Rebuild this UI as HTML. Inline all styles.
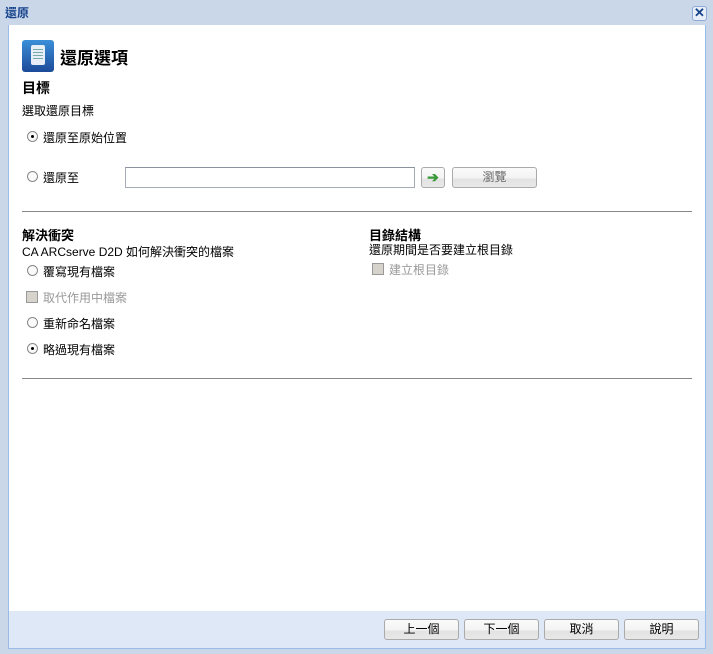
<!DOCTYPE html>
<html><head><meta charset="utf-8"><style>
*{margin:0;padding:0;box-sizing:border-box}
body{width:713px;height:654px;position:relative;overflow:hidden;background:#c9d7e8;font-family:"Liberation Sans","Noto Sans CJK TC",sans-serif;font-size:12px;color:#000}
.a{position:absolute}
.title{left:5px;top:4px;font-weight:bold;color:#15428b;font-size:12px}
.x{left:692px;top:6px;width:15px;height:15px;border:1px solid #8eaad6;border-radius:3px;background:#e8eef8;color:#15428b;font-size:13px;line-height:12px;text-align:center;font-weight:bold}
.body{left:8px;top:25px;width:698px;height:586px;background:#fff;border-left:1px solid #99bbe8;border-right:1px solid #99bbe8}
.foot{left:8px;top:611px;width:698px;height:38px;background:#dfe8f6;border:1px solid #99bbe8;border-top:none}
.rad{width:11px;height:11px;border:1px solid #888;border-radius:50%;background:#fafafa}
.rad.on::after{content:"";position:absolute;left:3px;top:3px;width:3px;height:3px;border-radius:50%;background:#000}
.chk{width:12px;height:12px;border:1px solid #999;background:#d6d2cc}
.btn{height:21px;border:1px solid #aaa;border-radius:3px;background:linear-gradient(#fafafa 0,#f3f3f3 55%,#e2e2e2 56%,#e8e8e8);text-align:center;line-height:19px;font-size:12px}
hr{position:absolute;border:none;border-top:1px solid #888;height:0}
</style></head><body>
<div class="a title">還原</div>
<div class="a x">✕</div>
<div class="a body"></div>
<div class="a foot"></div>
<div class="a" style="left:22px;top:40px;width:32px;height:32px;border-radius:3px;background:linear-gradient(#3b8fd8,#1c4a9a)"><div class="a" style="left:9px;top:5px;width:14px;height:20px;background:#e8eef5;border-radius:2px"></div><div class="a" style="left:11px;top:9px;width:10px;height:1px;background:#7aa;box-shadow:0 3px #7aa,0 6px #7aa,0 9px #7aa"></div></div>
<div class="a" style="left:60px;top:44px;font-size:17px;font-weight:bold">還原選項</div>
<div class="a" style="left:22px;top:78px;font-size:14px;font-weight:bold">目標</div>
<div class="a" style="left:22px;top:102px">選取還原目標</div>
<div class="a rad on" style="left:27px;top:131px"></div>
<div class="a" style="left:43px;top:129px">還原至原始位置</div>
<div class="a rad" style="left:27px;top:171px"></div>
<div class="a" style="left:43px;top:169px">還原至</div>
<div class="a" style="left:125px;top:167px;width:290px;height:21px;border:1px solid #a5acb5;border-top-color:#8a939e;background:#fff"></div>
<div class="a btn" style="left:421px;top:167px;width:24px;color:#3a9a3a;font-weight:bold;font-size:14px">➔</div>
<div class="a btn" style="left:452px;top:167px;width:85px;color:#666">瀏覽</div>
<hr style="left:22px;top:211px;width:670px">
<div class="a" style="left:22px;top:225px;font-size:13px;font-weight:bold">解決衝突</div>
<div class="a" style="left:22px;top:243px">CA ARCserve D2D 如何解決衝突的檔案</div>
<div class="a rad" style="left:27px;top:265px"></div>
<div class="a" style="left:43px;top:263px">覆寫現有檔案</div>
<div class="a chk" style="left:26px;top:291px"></div>
<div class="a" style="left:43px;top:289px;color:#999">取代作用中檔案</div>
<div class="a rad" style="left:27px;top:317px"></div>
<div class="a" style="left:43px;top:315px">重新命名檔案</div>
<div class="a rad on" style="left:27px;top:343px"></div>
<div class="a" style="left:43px;top:341px">略過現有檔案</div>
<div class="a" style="left:369px;top:225px;font-size:13px;font-weight:bold">目錄結構</div>
<div class="a" style="left:369px;top:241px">還原期間是否要建立根目錄</div>
<div class="a chk" style="left:372px;top:263px"></div>
<div class="a" style="left:389px;top:261px;color:#999">建立根目錄</div>
<hr style="left:22px;top:378px;width:670px">
<div class="a btn" style="left:384px;top:619px;width:75px">上一個</div>
<div class="a btn" style="left:464px;top:619px;width:75px">下一個</div>
<div class="a btn" style="left:544px;top:619px;width:75px">取消</div>
<div class="a btn" style="left:624px;top:619px;width:75px">說明</div>
</body></html>
